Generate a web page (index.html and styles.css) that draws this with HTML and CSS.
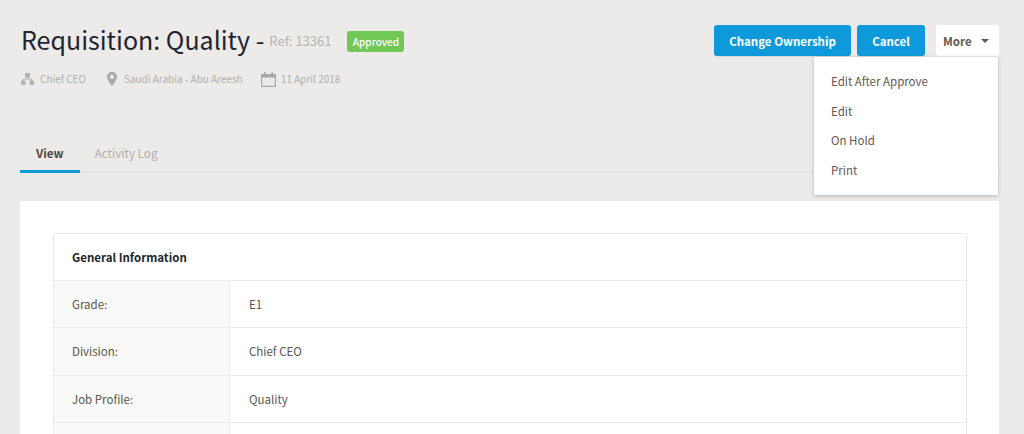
FILE: index.html
```html
<!DOCTYPE html>
<html lang="en">
<head>
<meta charset="utf-8">
<title>Requisition: Quality</title>
<link rel="stylesheet" href="styles.css">
</head>
<body>
<div class="page">
  <header class="head">
    <div class="head-left">
      <div class="title-row">
        <h1 class="title">Requisition: Quality -</h1>
        <span class="ref">Ref: 13361</span>
        <span class="badge">Approved</span>
      </div>
      <div class="meta">
        <span class="meta-item meta-org">
          <svg class="ico" width="15" height="12" viewBox="0 0 15 12"><path fill="#b4b3b0" d="M5 0h5v4.500H8V5.500h4V7.500H14V12H9.500V7.500H11V6.500H4V7.500H5.500V12H1V7.500H3V5.500H7V4.500H5z"/></svg>
          Chief CEO
        </span>
        <span class="meta-item meta-loc">
          <svg class="ico" width="10" height="14" viewBox="0 0 10 14"><path fill="#a9a8a5" fill-rule="evenodd" d="M5 0C2.200 0 0 2.100 0 4.800 0 8 5 14 5 14s5-6 5-9.200C10 2.100 7.800 0 5 0zm0 2.800a2.100 2.100 0 1 1 0 4.200 2.100 2.100 0 0 1 0-4.200z"/></svg>
          Saudi Arabia - Abu Areesh
        </span>
        <span class="meta-item">
          <svg class="ico" width="15" height="15" viewBox="0 0 15 15"><path fill="#a9a8a5" fill-rule="evenodd" d="M3 0h1.500v2h6V0H12v2h3v13H0V2h3zM1.200 5.500v8.300h12.600V5.500z"/></svg>
          11 April 2018
        </span>
      </div>
    </div>
    <div class="actions">
      <button class="btn btn-primary btn-wide">Change Ownership</button>
      <button class="btn btn-primary btn-cancel">Cancel</button>
      <div class="more-wrap">
        <button class="btn btn-more">More <span class="caret"></span></button>
        <ul class="menu">
          <li>Edit After Approve</li>
          <li>Edit</li>
          <li>On Hold</li>
          <li>Print</li>
        </ul>
      </div>
    </div>
  </header>

  <nav class="tabs">
    <a class="tab tab-active">View</a>
    <a class="tab tab-log">Activity Log</a>
  </nav>

  <main class="card">
    <section class="panel">
      <h2 class="panel-title">General Information</h2>
      <div class="row"><div class="label">Grade:</div><div class="value">E1</div></div>
      <div class="row"><div class="label">Division:</div><div class="value">Chief CEO</div></div>
      <div class="row"><div class="label">Job Profile:</div><div class="value">Quality</div></div>
      <div class="row"><div class="label"></div><div class="value"></div></div>
    </section>
  </main>
</div>
</body>
</html>
```
FILE: styles.css
```css
* { box-sizing: border-box; }
html, body { margin: 0; height: 100%; overflow: hidden; }
body {
  background: #ecebe9;
  color: #5a5551;
  font-family: "Noto Sans CJK SC", "Noto Sans", sans-serif;
  font-size: 11.500px;
  line-height: 18px;
}
.page { padding: 25px 25px 0 20px; }
.head { display: flex; justify-content: space-between; align-items: flex-start; height: 109px; }
.title-row { display: flex; align-items: center; height: 30px; }
.title { margin: 0 0 2px 1px; font-size: 25px; font-weight: 400; line-height: 30px; color: #1f2430; }
.ref { margin-left: 5px; font-size: 13px; color: #b5b3b0; padding-top: 1px; }
.badge {
  margin-left: 16px;
  width: 57px;
  text-align: center;
  background: #72c855;
  color: #fff;
  font-size: 10px;
  font-weight: 500;
  line-height: 21px;
  height: 21px;
  border-radius: 3px;
  margin-top: 2px;
}
.meta { display: flex; align-items: center; margin-top: 14px; height: 20px; font-size: 10px; color: #b0aeab; }
.meta-item { display: flex; align-items: center; gap: 5px; }
.meta-org { margin-right: 21px; }
.meta-loc { margin-right: 18px; gap: 7px; }
.ico { flex: none; }
.actions { display: flex; align-items: flex-start; }
.btn {
  height: 31px;
  border: 0;
  border-radius: 3px;
  font-family: inherit;
  font-size: 11.500px;
  font-weight: 700;
  padding: 0;
}
.btn-primary { background: #0e9ada; color: #fff; box-shadow: 0 1px 1px rgba(0,0,0,.08); }
.btn-wide { width: 137px; margin-right: 6px; }
.btn-cancel { width: 68px; margin-right: 11px; }
.btn-more { width: 63px; padding-left: 7px; background: #fff; color: #5f5853; display: flex; align-items: center; gap: 9px; }
.caret { width: 0; height: 0; border-left: 4px solid transparent; border-right: 4px solid transparent; border-top: 4px solid #5f5853; }
.more-wrap { position: relative; }
.menu {
  position: absolute;
  top: 32px;
  right: 1px;
  width: 184px;
  height: 138px;
  margin: 0;
  padding: 10px 17px;
  list-style: none;
  background: #fff;
  box-shadow: 0 1px 4px rgba(0,0,0,.22);
  z-index: 2;
  font-size: 11.500px;
  color: #5f5853;
}
.menu li { height: 29.700px; line-height: 29.700px; }
.tabs { display: flex; height: 39px; border-bottom: 1px solid #e2e1df; }
.tab { height: 39px; padding: 0 16px; line-height: 37px; font-size: 11.700px; color: #b0aeab; }
.tab-log { padding-left: 15px; }
.tab-active { color: #4c4844; font-weight: 700; border-bottom: 3px solid #0e9ada; }
.card { margin-top: 28px; background: #fff; padding: 32px 32px 32px 33px; height: 300px; }
.panel { border: 1px solid #ebeae8; border-radius: 3px; }
.panel-title { margin: 0; height: 46px; padding-left: 18px; font-size: 11.500px; line-height: 46px; font-weight: 700; color: #23262d; }
.row { display: flex; height: 47.400px; border-top: 1px solid #ebeae8; line-height: 47px; }
.label { width: 176px; padding-left: 18px; background: #f9f9f7; border-right: 1px solid #ebeae8; }
.value { padding-left: 19px; }
```
